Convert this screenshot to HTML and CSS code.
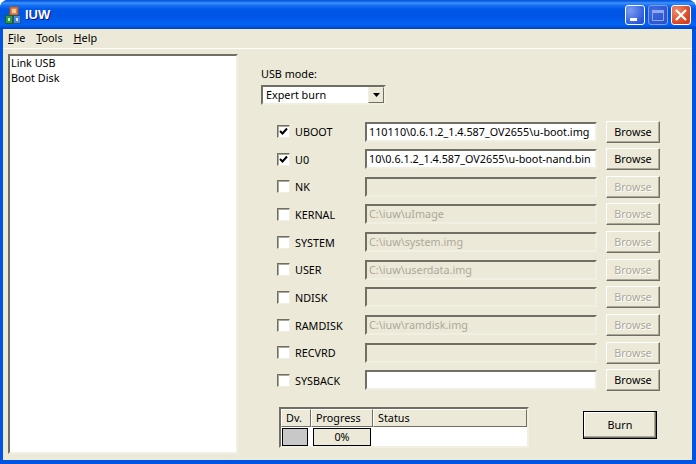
FILE: index.html
```html
<!DOCTYPE html>
<html lang="en">
<head>
<meta charset="utf-8">
<title>IUW</title>
<link rel="stylesheet" href="styles.css">
</head>
<body>
<div class="window">
  <header class="titlebar">
    <svg class="appicon" width="16" height="18" viewBox="0 0 16 18">
      <rect x="5" y="1" width="8" height="8" fill="#e8803a" stroke="#a85a20"/>
      <rect x="7" y="3" width="4" height="4" fill="#f7c9a0"/>
      <rect x="0.5" y="9.5" width="7" height="8" fill="#2f9a4a" stroke="#1c5f30"/>
      <rect x="3" y="12" width="2" height="3" fill="#d5f0c8"/>
      <rect x="8.5" y="9.5" width="7" height="8" fill="#4a8ad8" stroke="#25528f"/>
      <rect x="11" y="12" width="2" height="3" fill="#d6e6fa"/>
    </svg>
    <span class="title">IUW</span>
    <div class="caption">
      <span class="capbtn minbtn"><svg width="18" height="18" viewBox="0 0 18 18"><rect x="4" y="12" width="7" height="3" fill="#fff"/></svg></span>
      <span class="capbtn maxbtn"><svg width="18" height="18" viewBox="0 0 18 18"><path d="M3.5 4.5h11v10h-11z" fill="none" stroke="#8fa8ef"/><rect x="3" y="4" width="12" height="3" fill="#8fa8ef"/></svg></span>
      <span class="capbtn closebtn"><svg width="18" height="18" viewBox="0 0 18 18"><path d="M4 4l10 10M14 4L4 14" stroke="#fff" stroke-width="2.2" fill="none"/></svg></span>
    </div>
  </header>
  <div class="frame">
    <nav class="menubar">
      <span class="menuitem"><u>F</u>ile</span>
      <span class="menuitem"><u>T</u>ools</span>
      <span class="menuitem"><u>H</u>elp</span>
    </nav>
    <main class="client">
      <ul class="tree sunken">
        <li>Link USB</li>
        <li>Boot Disk</li>
      </ul>
      <section class="panel">
        <div class="modelabel">USB mode:</div>
        <div class="select sunken">
          <span class="selvalue">Expert burn</span>
          <span class="selarrow"><svg width="7" height="4" viewBox="0 0 7 4"><path d="M0 0h7L3.500 4z" fill="#000"/></svg></span>
        </div>
        <div class="rows">
          <div class="row">
            <span class="check"><svg width="9" height="9" viewBox="0 0 9 9"><path d="M1 4l2.500 2.500L8 1.500" fill="none" stroke="#000" stroke-width="2"/></svg></span>
            <span class="rowname">UBOOT</span>
            <div class="field sunken">110110\0.6.1.2_1.4.587_OV2655\u-boot.img</div>
            <div class="btn">Browse</div>
          </div>
          <div class="row">
            <span class="check"><svg width="9" height="9" viewBox="0 0 9 9"><path d="M1 4l2.500 2.500L8 1.500" fill="none" stroke="#000" stroke-width="2"/></svg></span>
            <span class="rowname">U0</span>
            <div class="field sunken">10\0.6.1.2_1.4.587_OV2655\u-boot-nand.bin</div>
            <div class="btn">Browse</div>
          </div>
          <div class="row">
            <span class="check"></span><span class="rowname">NK</span>
            <div class="field sunken off"></div>
            <div class="btn btnoff">Browse</div>
          </div>
          <div class="row">
            <span class="check"></span><span class="rowname">KERNAL</span>
            <div class="field sunken off">C:\iuw\uImage</div>
            <div class="btn btnoff">Browse</div>
          </div>
          <div class="row">
            <span class="check"></span><span class="rowname">SYSTEM</span>
            <div class="field sunken off">C:\iuw\system.img</div>
            <div class="btn btnoff">Browse</div>
          </div>
          <div class="row">
            <span class="check"></span><span class="rowname">USER</span>
            <div class="field sunken off">C:\iuw\userdata.img</div>
            <div class="btn btnoff">Browse</div>
          </div>
          <div class="row">
            <span class="check"></span><span class="rowname">NDISK</span>
            <div class="field sunken off"></div>
            <div class="btn btnoff">Browse</div>
          </div>
          <div class="row">
            <span class="check"></span><span class="rowname">RAMDISK</span>
            <div class="field sunken off">C:\iuw\ramdisk.img</div>
            <div class="btn btnoff">Browse</div>
          </div>
          <div class="row">
            <span class="check"></span><span class="rowname">RECVRD</span>
            <div class="field sunken off"></div>
            <div class="btn btnoff">Browse</div>
          </div>
          <div class="row">
            <span class="check"></span><span class="rowname">SYSBACK</span>
            <div class="field sunken"></div>
            <div class="btn">Browse</div>
          </div>
        </div>
        <div class="bottom">
          <div class="grid sunken">
            <div class="ghead">
              <span class="gh gh1">Dv.</span>
              <span class="gh gh2">Progress</span>
              <span class="gh gh3">Status</span>
            </div>
            <div class="gbody">
              <span class="dvcell"></span>
              <span class="progcell">0%</span>
            </div>
          </div>
          <div class="btn burn">Burn</div>
        </div>
      </section>
    </main>
  </div>
</div>
</body>
</html>
```
FILE: styles.css
```css
* { box-sizing: border-box; }
html, body { margin: 0; padding: 0; }
body {
  width: 696px;
  height: 464px;
  overflow: hidden;
  background: #fff;
  font: 10.8px/14px "Noto Sans", "Liberation Sans", Arial, sans-serif;
  color: #000;
}
.window {
  width: 696px;
  height: 464px;
  display: flex;
  flex-direction: column;
  border-radius: 8px 8px 0 0;
  overflow: hidden;
  background: #0054e3;
}
.titlebar {
  height: 29px;
  flex: none;
  display: flex;
  align-items: center;
  padding: 0 5px 0 5px;
  background: linear-gradient(180deg, #0a5ae0 0, #0a5ae0 1px, #3d95ff 3px, #1a73f5 5px, #0058e8 9px, #0055e5 16px, #0260f0 23px, #0364f5 25px, #0050d8 27px, #0042c0 29px);
}
.appicon { margin-top: 1px; flex: none; }
.title {
  margin-left: 4px;
  font: bold 13px/16px "Liberation Sans", Arial, sans-serif;
  color: #fff;
  text-shadow: 1px 1px 0 #0f1089;
}
.caption {
  margin-left: auto;
  margin-top: 1px;
  display: flex;
  gap: 3px;
}
.capbtn {
  width: 20px;
  height: 20px;
  border: 1px solid #fff;
  border-radius: 3px;
  display: flex;
  align-items: center;
  justify-content: center;
}
.minbtn { background: radial-gradient(circle at 25% 25%, #7a9df2, #2a55d8 80%); }
.maxbtn { background: radial-gradient(circle at 25% 25%, #3f6be0, #2b55cf 80%); border-color: #7f9be8; }
.closebtn { background: radial-gradient(circle at 25% 25%, #ee8a68, #d8401c 75%); }
.frame {
  flex: 1;
  min-height: 0;
  margin: 0 4px 4px 3px;
  background: #ece9d8;
  display: flex;
  flex-direction: column;
}
.menubar {
  height: 20px;
  flex: none;
  display: flex;
  align-items: center;
  padding: 0 0 1px 5px;
  gap: 11px;
  border-bottom: 1px solid #fff;
}
.menuitem { line-height: 14px; }
.client {
  flex: 1;
  min-height: 0;
  display: flex;
  padding: 5px 32px 6px 5px;
}
.sunken {
  border-style: solid;
  border-width: 2px;
  border-color: #716f64 #f1efe2 #f1efe2 #716f64;
  outline: 0;
  background: #fff;
}
.tree {
  width: 230px;
  height: 400px;
  margin: 0;
  padding: 0 0 0 1px;
  list-style: none;
  flex: none;
}
.tree li { height: 15px; line-height: 13px; }
.panel {
  margin-left: 23px;
  flex: 1;
  min-width: 0;
  display: flex;
  flex-direction: column;
}
.modelabel { margin-top: 13px; height: 14px; }
.select {
  margin-top: 4px;
  width: 125px;
  height: 20px;
  display: flex;
  align-items: center;
  padding-left: 3px;
  position: relative;
}
.selvalue { flex: 1; }
.selarrow {
  width: 16px;
  height: 16px;
  background: #ece9d8;
  border: 1px solid;
  border-color: #f1efe2 #716f64 #716f64 #f1efe2;
  display: flex;
  align-items: center;
  justify-content: center;
}
.rows {
  margin-top: 16px;
  height: 270px;
  display: flex;
  flex-direction: column;
  justify-content: space-between;
}
.row {
  height: 21px;
  display: flex;
  align-items: center;
  padding-left: 16px;
}
.check {
  width: 13px;
  height: 13px;
  flex: none;
  background: #fff;
  border: 1px solid;
  border-color: #716f64 #f1efe2 #f1efe2 #716f64;
  box-shadow: inset 1px 1px 0 #aca899;
  display: flex;
  align-items: center;
  justify-content: center;
}
.rowname { width: 75px; padding: 1px 0 0 5px; flex: none; }
.field {
  width: 232px;
  height: 20px;
  flex: none;
  padding-left: 2px;
  line-height: 16px;
  white-space: nowrap;
  overflow: hidden;
}
.field.off {
  background: #ece9d8;
  color: #aca899;
}
.btn {
  border: 1px solid;
  border-color: #fff #716f64 #716f64 #fff;
  box-shadow: inset -1px -1px 0 #aca899;
  background: #ece9d8;
  display: flex;
  align-items: center;
  justify-content: center;
}
.row .btn {
  width: 54px;
  height: 22px;
  margin-left: 9px;
  flex: none;
}
.btnoff {
  color: #aca899;
  text-shadow: 1px 1px 0 #fff;
}
.bottom {
  margin-top: 16px;
  display: flex;
  align-items: flex-start;
  padding-left: 18px;
}
.grid {
  width: 250px;
  height: 41px;
  flex: none;
}
.ghead {
  display: flex;
  height: 18px;
}
.gh {
  background: #ece9d8;
  border: 1px solid;
  border-color: #fff #716f64 #716f64 #fff;
  padding-left: 4px;
  line-height: 16px;
  flex: none;
}
.gh1 { width: 30px; }
.gh2 { width: 62px; }
.gh3 { flex: 1; }
.gbody {
  display: flex;
  gap: 5px;
  padding: 1px 0 0 1px;
}
.dvcell {
  width: 26px;
  height: 18px;
  background: #c8c8c8;
  border: 1px solid #000;
}
.progcell {
  width: 58px;
  height: 18px;
  background: #ece9d8;
  border: 1px solid #000;
  text-align: center;
  line-height: 16px;
}
.burn {
  width: 74px;
  height: 28px;
  margin: 4px 0 0 54px;
  border: 1px solid #000;
  box-shadow: inset -1px -1px 0 #716f64, inset -2px -2px 0 #aca899, inset 1px 1px 0 #fff;
  flex: none;
}
```
